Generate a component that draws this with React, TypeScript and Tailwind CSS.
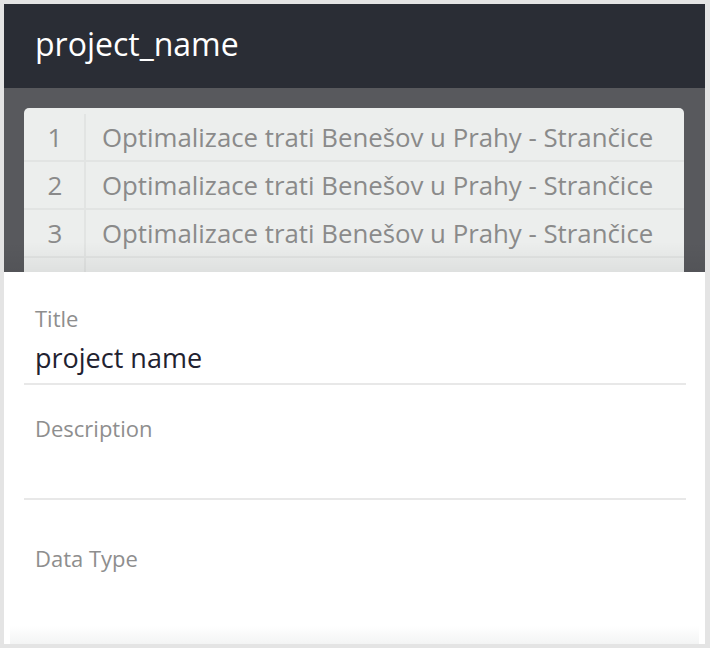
import React from "react";

const rows = [1, 2, 3, 4];
const text = "Optimalizace trati Benešov u Prahy - Strančice";

export default function App() {
  return (
    <div className="w-[710px] h-[648px] bg-[#e4e4e4] pt-[4px] pl-[4px]" style={{ fontFamily: '"Open Sans", sans-serif' }}>
      <div className="w-[701px] h-[640px] flex flex-col overflow-hidden bg-white">
        <div className="h-[84px] bg-[#2a2d35] flex items-center px-[31px] shrink-0">
          <span className="text-white text-[32px] leading-none pb-[4px]">project_name</span>
        </div>
        <div className="h-[184px] bg-[#58595d] pt-[20px] pl-[20px] pr-[21px] overflow-hidden shrink-0 relative">
          <div className="bg-[#eceeed] rounded-t-[5px] pt-[6px]">
            {rows.map((n) => (
              <div key={n} className="flex h-[48px] border-b-[2px] border-[#e2e4e3]">
                <div className="w-[62px] border-r-[2px] border-[#e2e4e3] flex items-center justify-center pl-[2px] text-[#8a8a8a] text-[26px]">{n}</div>
                <div className="flex-1 flex items-center pl-[16px] text-[#8a8a8a] text-[25.8px] whitespace-nowrap overflow-hidden">{text}</div>
              </div>
            ))}
          </div>
          <div className="absolute left-0 right-0 bottom-0 h-[30px] bg-gradient-to-b from-transparent to-[rgba(0,0,0,0.06)]" />
        </div>
        <div className="flex-1 flex flex-col pl-[20px] pr-[19px] relative">
          <div className="pt-[33px] pl-[11px] text-[#8e8e8e] text-[22px] leading-[26px]">Title</div>
          <div className="pt-[10px] pl-[11px] text-[#1f2230] text-[27px] leading-[34px]">project name</div>
          <div className="mt-[8px] h-[2px] bg-[#e8e8e8]" />
          <div className="pt-[30px] pl-[11px] text-[#8e8e8e] text-[22px] leading-[26px]">Description</div>
          <div className="mt-[57px] h-[2px] bg-[#e8e8e8]" />
          <div className="pt-[45px] pl-[11px] text-[#8e8e8e] text-[22px] leading-[26px]">Data Type</div>
          <div className="absolute left-[6px] right-[6px] bottom-0 h-[18px] bg-gradient-to-b from-white to-[#f3f4f4]" />
        </div>
      </div>
    </div>
  );
}
